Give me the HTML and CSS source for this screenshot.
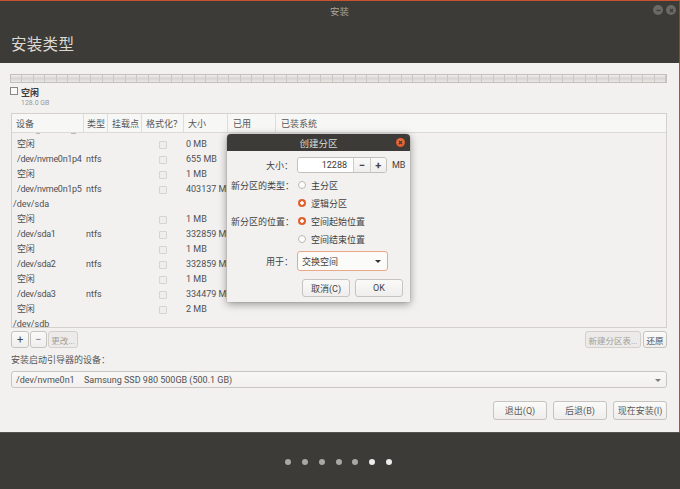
FILE: index.html
```html
<!DOCTYPE html>
<html lang="zh-CN">
<head>
<meta charset="utf-8">
<title>安装</title>
<link rel="stylesheet" href="styles.css">
</head>
<body>
<div class="window">
  <header class="header">
    <div class="titlebar">
      <span class="title">安装</span>
      <div class="wbtns">
        <span class="wbtn"><svg width="9" height="9" viewBox="0 0 9 9"><path d="M2.5 4.5h4" stroke="#3c3b37" stroke-width="1.2"/></svg></span>
        <span class="wbtn"><svg width="9" height="9" viewBox="0 0 9 9"><path d="M3 3l3 3M6 3l-3 3" stroke="#3c3b37" stroke-width="1.2"/></svg></span>
      </div>
    </div>
    <h1 class="heading">安装类型</h1>
  </header>

  <main class="main">
    <div class="pbar"></div>
    <div class="legend">
      <div class="legend-top"><span class="lbox"></span><span class="lname">空闲</span></div>
      <div class="lsize">128.0 GB</div>
    </div>

    <div class="table">
      <div class="thead row-grid">
        <div class="th">设备</div>
        <div class="th th-type">类型</div>
        <div class="th">挂载点</div>
        <div class="th">格式化？</div>
        <div class="th">大小</div>
        <div class="th th-wide">已用</div>
        <div class="th th-wide last">已装系统</div>
      </div>
      <div class="tbody">
        <div class="partial"><span class="pm pm1"></span><span class="pm pm2"></span></div>
        <div class="tr row-grid"><div class="td dev">空闲</div><div></div><div></div><div class="td cbc"><span class="cb"></span></div><div class="td size">0 MB</div><div></div><div></div></div>
        <div class="tr row-grid"><div class="td dev">/dev/nvme0n1p4</div><div class="td type">ntfs</div><div></div><div class="td cbc"><span class="cb"></span></div><div class="td size">655 MB</div><div></div><div></div></div>
        <div class="tr row-grid"><div class="td dev">空闲</div><div></div><div></div><div class="td cbc"><span class="cb"></span></div><div class="td size">1 MB</div><div></div><div></div></div>
        <div class="tr row-grid"><div class="td dev">/dev/nvme0n1p5</div><div class="td type">ntfs</div><div></div><div class="td cbc"><span class="cb"></span></div><div class="td size">403137 MB</div><div></div><div></div></div>
        <div class="tr row-grid"><div class="td disk">/dev/sda</div></div>
        <div class="tr row-grid"><div class="td dev">空闲</div><div></div><div></div><div class="td cbc"><span class="cb"></span></div><div class="td size">1 MB</div><div></div><div></div></div>
        <div class="tr row-grid"><div class="td dev">/dev/sda1</div><div class="td type">ntfs</div><div></div><div class="td cbc"><span class="cb"></span></div><div class="td size">332859 MB</div><div></div><div></div></div>
        <div class="tr row-grid"><div class="td dev">空闲</div><div></div><div></div><div class="td cbc"><span class="cb"></span></div><div class="td size">1 MB</div><div></div><div></div></div>
        <div class="tr row-grid"><div class="td dev">/dev/sda2</div><div class="td type">ntfs</div><div></div><div class="td cbc"><span class="cb"></span></div><div class="td size">332859 MB</div><div></div><div></div></div>
        <div class="tr row-grid"><div class="td dev">空闲</div><div></div><div></div><div class="td cbc"><span class="cb"></span></div><div class="td size">1 MB</div><div></div><div></div></div>
        <div class="tr row-grid"><div class="td dev">/dev/sda3</div><div class="td type">ntfs</div><div></div><div class="td cbc"><span class="cb"></span></div><div class="td size">334479 MB</div><div></div><div></div></div>
        <div class="tr row-grid"><div class="td dev">空闲</div><div></div><div></div><div class="td cbc"><span class="cb"></span></div><div class="td size">2 MB</div><div></div><div></div></div>
        <div class="tr row-grid last-row"><div class="td disk">/dev/sdb</div></div>
      </div>
    </div>

    <div class="tools">
      <div class="tgroup">
        <span class="btn tb-plus">+</span>
        <span class="btn tb-minus">−</span>
        <span class="btn dis tb-change">更改...</span>
      </div>
      <div class="tgroup gap2">
        <span class="btn dis tb-newtable">新建分区表...</span>
        <span class="btn tb-revert">还原</span>
      </div>
    </div>

    <div class="bootlabel">安装启动引导器的设备：</div>
    <div class="combo">
      <span class="c-dev">/dev/nvme0n1</span>
      <span class="c-name">Samsung SSD 980 500GB (500.1 GB)</span>
      <span class="c-arrow"></span>
    </div>

    <div class="actions">
      <span class="btn abtn">退出(Q)</span>
      <span class="btn abtn">后退(B)</span>
      <span class="btn abtn">现在安装(I)</span>
    </div>
  </main>

  <footer class="footer">
    <span class="dot"></span><span class="dot"></span><span class="dot"></span><span class="dot"></span><span class="dot"></span><span class="dot on"></span><span class="dot on"></span>
  </footer>

  <div class="dialog">
    <div class="dtitle">
      <span>创建分区</span>
      <span class="dclose"><svg width="9" height="9" viewBox="0 0 9 9"><path d="M3 3l3 3M6 3l-3 3" stroke="#3c3b37" stroke-width="1.3"/></svg></span>
    </div>
    <div class="dbody">
      <div class="drow spinrow">
        <div class="dlabel">大小：</div>
        <div class="dctl">
          <div class="spin">
            <span class="sval">12288</span>
            <span class="sbtn">−</span>
            <span class="sbtn">+</span>
          </div>
          <span class="unit">MB</span>
        </div>
      </div>
      <div class="drow rrow first-r">
        <div class="dlabel">新分区的类型：</div>
        <div class="dctl"><span class="radio"></span><span>主分区</span></div>
      </div>
      <div class="drow rrow">
        <div class="dlabel"></div>
        <div class="dctl"><span class="radio sel"></span><span>逻辑分区</span></div>
      </div>
      <div class="drow rrow">
        <div class="dlabel">新分区的位置：</div>
        <div class="dctl"><span class="radio sel"></span><span>空间起始位置</span></div>
      </div>
      <div class="drow rrow">
        <div class="dlabel"></div>
        <div class="dctl"><span class="radio"></span><span>空间结束位置</span></div>
      </div>
      <div class="drow comborow">
        <div class="dlabel">用于：</div>
        <div class="dctl">
          <div class="dcombo"><span>交换空间</span><span class="dc-arrow"></span></div>
        </div>
      </div>
      <div class="dbtns">
        <span class="btn dbtn">取消(C)</span>
        <span class="btn dbtn">OK</span>
      </div>
    </div>
  </div>
</div>
</body>
</html>
```

FILE: styles.css
```css
* { box-sizing: border-box; }
html, body { margin: 0; padding: 0; }
body {
  width: 680px;
  height: 489px;
  overflow: hidden;
  background: #3c3b37;
  font-family: "Roboto", "Noto Sans CJK SC", sans-serif;
  font-size: 9px;
  color: #4c4c4c;
}
.window {
  position: relative;
  width: 680px;
  height: 489px;
  display: flex;
  flex-direction: column;
}

/* header */
.header {
  height: 63px;
  background: #3c3b37;
  border-top: 1px solid #c9512e;
  border-right: 1px solid #8a4a3a;
}
.titlebar {
  height: 19px;
  position: relative;
  display: flex;
  align-items: center;
  justify-content: center;
}
.title {
  color: #a9a69f;
  font-size: 9.5px;
  font-family: "Noto Sans CJK SC", sans-serif;
}
.wbtns {
  position: absolute;
  right: 3px;
  top: 4px;
  display: flex;
  gap: 3px;
}
.wbtn {
  width: 10px;
  height: 10px;
  border-radius: 50%;
  background: #6a6965;
  display: flex;
  align-items: center;
  justify-content: center;
}
.wbtn svg { display: block; }
.heading {
  margin: 13px 0 0 11px;
  font-size: 15.5px;
  line-height: 20px;
  font-weight: normal;
  color: #dcd9d2;
  font-family: "Noto Sans CJK SC", sans-serif;
  letter-spacing: 0.3px;
}

/* main */
.main {
  height: 369px;
  background: #f2f1f0;
  padding: 11px 12px 0 10px;
  border-right: 1px solid #a8523f;
  display: flex;
  flex-direction: column;
}
.pbar {
  height: 9px;
  border: 1px solid #c4c1bc;
  background:
    repeating-linear-gradient(90deg, transparent 0 10.5px, #cac8c4 10.5px 11.5px),
    linear-gradient(#efeeec, #d8d6d3 50%, #e9e8e6);
}
.legend { margin-top: 4px; }
.legend-top {
  height: 11px;
  display: flex;
  align-items: center;
}
.lbox {
  width: 8px;
  height: 8px;
  border: 1px solid #8a8884;
  background: #fafafa;
  margin-right: 3px;
  margin-top: -3px;
}
.lname {
  font-size: 9px;
  color: #3a3a3a;
  font-weight: bold;
  font-family: "Noto Sans CJK SC", sans-serif;
}
.lsize {
  margin-left: 11px;
  font-size: 7px;
  line-height: 10px;
  color: #9b9995;
}

/* table */
.table {
  margin: 5px 0 0 1px;
  height: 215px;
  border: 1px solid #d4d1cd;
  display: flex;
  flex-direction: column;
}
.row-grid {
  display: grid;
  grid-template-columns: 72px 24px 34px 42px 44px 48px 1fr;
}
.thead {
  height: 19px;
  background: #f7f7f6;
  border-bottom: 1px solid #dddad6;
}
.th {
  padding-left: 4px;
  border-right: 1px solid #e0ddd9;
  display: flex;
  align-items: center;
  color: #555;
  font-size: 9px;
  font-family: "Noto Sans CJK SC", sans-serif;
}
.th-type { padding-left: 3px; }
.th-wide { padding-left: 5px; }
.th.last { border-right: none; }
.tbody {
  flex: 1;
  overflow: hidden;
}
.partial {
  height: 4px;
  position: relative;
}
.pm {
  position: absolute;
  top: 0;
  height: 1px;
  background: #b9b7b3;
}
.pm1 { left: 24px; width: 4px; }
.pm2 { left: 59px; width: 5px; }
.tr {
  height: 15px;
  align-items: center;
}
.last-row { height: 13px; overflow: hidden; }
.td {
  white-space: nowrap;
  color: #505050;
  line-height: 15px;
}
.dev { padding-left: 5px; letter-spacing: -0.3px; overflow: hidden; }
.disk { padding-left: 1px; grid-column: 1 / 3; }
.type { padding-left: 2px; }
.size { padding-left: 2px; }
.cbc {
  display: flex;
  justify-content: center;
  align-items: center;
}
.cb {
  width: 8px;
  height: 8px;
  border: 1px solid #d6d4d0;
  border-radius: 1px;
  background: #efeeed;
}

/* buttons */
.btn {
  display: flex;
  align-items: center;
  justify-content: center;
  border: 1px solid #c7c4bf;
  border-radius: 3px;
  background: linear-gradient(#fafaf9, #efeeec);
  color: #4c4c4c;
  font-family: "Roboto", "Noto Sans CJK SC", sans-serif;
  white-space: nowrap;
}
.btn.dis {
  background: #ecebea;
  color: #a3a09b;
  border-color: #d3d0cc;
}
.tools {
  margin-top: 3px;
  margin-left: 1px;
  height: 17px;
  display: flex;
  justify-content: space-between;
}
.tgroup { display: flex; gap: 1px; }
.tgroup.gap2 { gap: 2px; }
.tgroup .btn { height: 17px; font-size: 8.5px; }
.tb-plus { width: 18px; font-size: 11px !important; color: #444; }
.tb-minus { width: 17px; font-size: 11px !important; color: #777; }
.tb-change { width: 30px; }
.tb-newtable { width: 56px; }
.tb-revert { width: 24px; }

.bootlabel {
  margin-top: 7px;
  margin-left: 1px;
  line-height: 10px;
  color: #555;
  font-family: "Noto Sans CJK SC", sans-serif;
}
.combo {
  margin-top: 6px;
  margin-left: 1px;
  height: 17px;
  border: 1px solid #c9c6c2;
  border-radius: 3px;
  background: linear-gradient(#f8f8f7, #f1f0ef);
  display: flex;
  align-items: center;
  padding-left: 4px;
  position: relative;
  color: #505050;
}
.c-dev { width: 68px; }
.c-arrow {
  position: absolute;
  right: 5px;
  top: 7px;
  border-left: 3px solid transparent;
  border-right: 3px solid transparent;
  border-top: 3px solid #7d7b77;
}
.actions {
  margin-top: 13px;
  display: flex;
  justify-content: flex-end;
  gap: 6px;
}
.abtn {
  width: 54px;
  height: 19px;
  font-size: 9px;
  color: #5a5a5a;
}

/* footer */
.footer {
  flex: 1;
  background: #3c3b37;
  border-top: 1px solid #55534f;
  display: flex;
  align-items: center;
  justify-content: center;
  gap: 10.8px;
  padding-right: 3px;
  padding-top: 1px;
}
.dot {
  width: 6px;
  height: 6px;
  border-radius: 50%;
  background: #a9a8a5;
}
.dot.on { background: #ececea; }

/* dialog */
.dialog {
  position: absolute;
  left: 227px;
  top: 134px;
  width: 183px;
  height: 168px;
  background: #f2f1f0;
  border-radius: 4px 4px 0 0;
  box-shadow: 0 2px 9px rgba(0, 0, 0, 0.4), 0 0 1px rgba(0, 0, 0, 0.5);
  display: flex;
  flex-direction: column;
}
.dtitle {
  height: 17px;
  background: #3c3b37;
  border-radius: 4px 4px 0 0;
  display: flex;
  align-items: center;
  justify-content: center;
  position: relative;
  color: #dfdbd2;
  font-family: "Noto Sans CJK SC", sans-serif;
  font-size: 9.5px;
}
.dclose {
  position: absolute;
  right: 5px;
  top: 4px;
  width: 9px;
  height: 9px;
  border-radius: 50%;
  background: radial-gradient(circle at 50% 40%, #f07a4a, #d9481a);
  display: flex;
  align-items: center;
  justify-content: center;
}
.dclose svg { display: block; }
.dbody {
  padding: 6px 7px 0 4px;
  font-family: "Noto Sans CJK SC", sans-serif;
  color: #3f3f3f;
}
.drow {
  display: grid;
  grid-template-columns: 62px 1fr;
  column-gap: 4px;
  align-items: center;
}
.dlabel { text-align: right; white-space: nowrap; font-size: 9px; }
.dctl { display: flex; align-items: center; }
.spinrow { height: 16px; }
.spin {
  width: 90px;
  height: 16px;
  border: 1px solid #c3c0bb;
  border-radius: 3px;
  display: flex;
  overflow: hidden;
}
.sval {
  width: 55px;
  background: #fff;
  text-align: right;
  padding-right: 6px;
  line-height: 14px;
  font-family: "Roboto", sans-serif;
  color: #3a3a3a;
}
.sbtn {
  flex: 1;
  border-left: 1px solid #d0cdc8;
  background: linear-gradient(#fafaf9, #efeeec);
  display: flex;
  align-items: center;
  justify-content: center;
  font-family: "Roboto", sans-serif;
  font-size: 11px;
  font-weight: bold;
  color: #444;
}
.unit { margin-left: 5px; font-family: "Roboto", sans-serif; }
.rrow { height: 18px; }
.first-r { margin-top: 3px; }
.radio {
  width: 8px;
  height: 8px;
  border-radius: 50%;
  border: 1px solid #bcb9b4;
  background: #fcfcfc;
  margin: 0 5px 0 1px;
}
.radio.sel {
  border: none;
  background: radial-gradient(circle, #fff 0 1.5px, #e2602d 2px);
}
.comborow { height: 20px; margin-top: 3px; }
.dcombo {
  width: 91px;
  height: 20px;
  border: 1px solid #eaa789;
  border-radius: 3px;
  background: #fbfbfa;
  display: flex;
  align-items: center;
  padding-left: 4px;
  position: relative;
  color: #3f3f3f;
}
.dc-arrow {
  position: absolute;
  right: 6px;
  top: 8px;
  border-left: 3px solid transparent;
  border-right: 3px solid transparent;
  border-top: 3.5px solid #333;
}
.dbtns {
  margin-top: 8px;
  display: flex;
  justify-content: flex-end;
  gap: 5px;
}
.dbtn {
  width: 48px;
  height: 18px;
  font-size: 9px;
  color: #444;
}
```
